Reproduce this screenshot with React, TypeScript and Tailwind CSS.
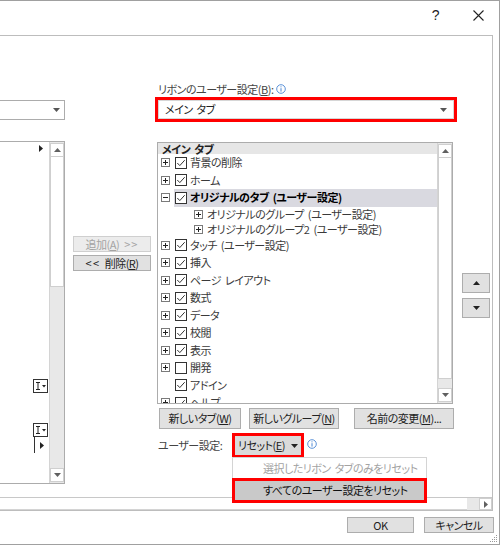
import React from "react";

const Tri = ({ dir = "down", color = "#555" }: { dir?: "down" | "up" | "right"; color?: string }) => {
  if (dir === "right")
    return (
      <svg width="4" height="7" viewBox="0 0 4 7" className="shrink-0">
        <path d="M0 0 L4 3.5 L0 7 Z" fill={color} />
      </svg>
    );
  return (
    <svg width="7" height="4" viewBox="0 0 7 4" className="shrink-0">
      <path d={dir === "down" ? "M0 0 H7 L3.5 4 Z" : "M0 4 H7 L3.5 0 Z"} fill={color} />
    </svg>
  );
};

const Chk = ({ checked = true }: { checked?: boolean }) => (
  <svg width="12" height="12" viewBox="0 0 12 12" className="shrink-0">
    <rect x="0.5" y="0.5" width="11" height="11" fill="white" stroke="#333" />
    {checked && <path d="M2.3 6 L4.8 8.6 L9.7 3.2" fill="none" stroke="#333" strokeWidth="1" />}
  </svg>
);

const Exp = ({ minus = false }: { minus?: boolean }) => (
  <svg width="9" height="9" viewBox="0 0 9 9" className="shrink-0">
    <rect x="0.5" y="0.5" width="8" height="8" fill="white" stroke="#7a7a7a" />
    <path d="M2 4.5 H7" stroke="#222" />
    {!minus && <path d="M4.5 2 V7" stroke="#222" />}
  </svg>
);

const ArrowBox = ({ dir }: { dir: "up" | "down" | "right" }) => (
  <div className="w-full h-[14px] shrink-0 bg-white border border-[#cfcfcf] flex items-center justify-center">
    <Tri dir={dir} color="#606060" />
  </div>
);

const VScroll = ({ thumb }: { thumb: number }) => (
  <div className="w-[15px] shrink-0 border-l border-[#d4d4d4] bg-[#e8e8e8] flex flex-col pt-[1px] pb-[1px]">
    <ArrowBox dir="up" />
    <div className="shrink-0 bg-white border-l border-r border-b border-[#cfcfcf]" style={{ height: thumb }} />
    <div className="flex-1" />
    <ArrowBox dir="down" />
  </div>
);

const FmtIcon = () => (
  <svg width="15" height="14" viewBox="0 0 15 14" className="shrink-0">
    <rect x="0.5" y="0.5" width="14" height="13" fill="white" stroke="#333" />
    <path d="M3 3.5 H7 M5 3.5 V10.5 M3 10.5 H7" stroke="#222" strokeWidth="1" fill="none" />
    <path d="M9 6 H13 L11 8.5 Z" fill="#222" />
  </svg>
);

const Btn = ({ children, className = "" }: { children: React.ReactNode; className?: string }) => (
  <div
    className={`border border-[#adadad] bg-[#e1e1e1] flex items-center justify-center text-[#222] text-[11px] leading-none whitespace-nowrap ${className}`}
  >
    {children}
  </div>
);

const Row = ({
  label,
  exp = true,
  minus = false,
  checked = true,
  hl = false,
}: {
  label: string;
  exp?: boolean;
  minus?: boolean;
  checked?: boolean;
  hl?: boolean;
}) => (
  <div className="h-[17.5px] shrink-0 flex items-center">
    <div className="w-[16px] shrink-0 pl-[3px] flex items-center">{exp && <Exp minus={minus} />}</div>
    <div className={`flex-1 h-full flex items-center gap-[3px] pl-[1px] ${hl ? "bg-[#d9d9e0]" : ""}`}>
      <Chk checked={checked} />
      <span className={`whitespace-nowrap leading-none ${hl ? "font-bold text-black" : "text-[#3a3a3a]"}`}>{label}</span>
    </div>
  </div>
);

const GroupRow = ({ label }: { label: string }) => (
  <div className="h-[15px] shrink-0 flex items-center pl-[36px] gap-[4px]">
    <Exp />
    <span className="whitespace-nowrap leading-none text-[#3a3a3a]">{label}</span>
  </div>
);

const Info = () => (
  <svg width="10" height="10" viewBox="0 0 10 10" className="shrink-0">
    <circle cx="5" cy="5" r="4.3" fill="none" stroke="#4a86d4" strokeWidth="0.9" />
    <path d="M5 4.2 V7.6" stroke="#4a86d4" strokeWidth="1" />
    <circle cx="5" cy="2.8" r="0.6" fill="#4a86d4" />
  </svg>
);

export default function App() {
  return (
    <div className="w-[500px] h-[545px] bg-white border-t border-r border-b border-[#a0a0a0] flex flex-col overflow-hidden font-['Noto_Sans_CJK_JP',sans-serif] [font-feature-settings:'palt'] text-[11px] tracking-[-0.5px] [word-spacing:2px] text-[#333]">
      {/* title bar */}
      <div className="h-[34px] shrink-0 flex items-start justify-end pt-[7px] pr-[15px] gap-[34px]">
        <span className="text-[14px] leading-[14px] text-[#222] font-['Liberation_Sans',sans-serif]">?</span>
        <svg width="11" height="11" viewBox="0 0 11 11" className="mt-[2px]">
          <path d="M0.5 0.5 L10.5 10.5 M10.5 0.5 L0.5 10.5" stroke="#222" strokeWidth="1.1" />
        </svg>
      </div>

      {/* panel */}
      <div className="w-[493px] h-[476px] shrink-0 border-t border-r border-b border-[#bdbdbd] flex flex-col">
        <div className="h-[461px] shrink-0 flex">
          {/* left column */}
          <div className="w-[65px] shrink-0 flex flex-col">
            <div className="mt-[64px] h-[20px] border border-l-0 border-[#acacac] flex items-center justify-end pr-[4px]">
              <Tri dir="down" />
            </div>
            <div className="mt-[21px] h-[343px] border border-l-0 border-[#acacac] flex">
              <div className="flex-1 flex flex-col items-end">
                <div className="mt-[3px] mr-[6px]">
                  <Tri dir="right" color="#222" />
                </div>
                <div className="mt-[227px] mr-[1px]">
                  <FmtIcon />
                </div>
                <div className="mt-[30px] mr-[1px]">
                  <FmtIcon />
                </div>
                <div className="w-[15px] h-[16px] mr-[1px] pl-[1px] flex">
                  <div className="border-l border-[#333] h-full pl-[5px] flex items-center">
                    <Tri dir="right" color="#222" />
                  </div>
                </div>
              </div>
              <VScroll thumb={130} />
            </div>
          </div>

          {/* middle column */}
          <div className="ml-[8px] w-[78px] shrink-0 flex flex-col gap-[3px] pt-[200px]">
            <div className="h-[16px] border border-[#cfcfcf] bg-[#ececec] flex items-center justify-center text-[#a3a3a3] leading-none whitespace-nowrap">
              追加(<span className="underline">A</span>)<span className="ml-[5px] tracking-[1px]">&gt;&gt;</span>
            </div>
            <Btn className="h-[16px]">
              <span className="tracking-[1.5px] mr-[4px]">&lt;&lt;</span>削除(<span className="underline">R</span>)
            </Btn>
          </div>

          {/* right column */}
          <div className="ml-[4px] w-[302px] shrink-0 flex flex-col">
            <div className="mt-[46px] h-[14px] pl-[3px] flex items-center gap-[3px] text-[#444] leading-none whitespace-nowrap">
              <span>
                リボンのユーザー設定(<span className="underline">B</span>):
              </span>
              <Info />
            </div>
            <div className="mt-[1px] h-[25px] border-[3px] border-[#ff0000]">
              <div className="h-full border border-[#d6d6d6] bg-white flex items-center justify-between pl-[6px] pr-[6px]">
                <span className="leading-none text-[#222]">メイン タブ</span>
                <Tri dir="down" />
              </div>
            </div>

            {/* tree */}
            <div className="ml-[2px] mt-[20px] h-[262px] w-[296px] border border-[#acacac] flex">
              <div className="flex-1 overflow-hidden flex flex-col">
                <div className="h-[11px] shrink-0 bg-[#e6e6e6] pl-[4px] font-bold text-[#222] leading-[12px] whitespace-nowrap">
                  メイン タブ
                </div>
                <Row label="背景の削除" />
                <Row label="ホーム" />
                <Row label="オリジナルのタブ (ユーザー設定)" minus hl />
                <GroupRow label="オリジナルのグループ (ユーザー設定)" />
                <GroupRow label="オリジナルのグループ2 (ユーザー設定)" />
                <Row label="タッチ (ユーザー設定)" />
                <Row label="挿入" />
                <Row label="ページ レイアウト" />
                <Row label="数式" />
                <Row label="データ" />
                <Row label="校閲" />
                <Row label="表示" />
                <Row label="開発" checked={false} />
                <Row label="アドイン" exp={false} />
                <Row label="ヘルプ" />
              </div>
              <VScroll thumb={221} />
            </div>

            {/* buttons row */}
            <div className="mt-[4px] h-[21px] flex pl-[4px]">
              <Btn className="w-[82px] h-full">
                新しいタブ(<span className="underline">W</span>)
              </Btn>
              <Btn className="ml-[8px] w-[90px] h-full">
                新しいグループ(<span className="underline">N</span>)
              </Btn>
              <Btn className="ml-[15px] w-[100px] h-full">
                名前の変更(<span className="underline">M</span>)...
              </Btn>
            </div>

            {/* user settings row */}
            <div className="mt-[4px] h-[25px] flex items-center relative">
              <div className="w-[77px] shrink-0 pl-[3px] text-[#444] leading-none whitespace-nowrap">ユーザー設定:</div>
              <div className="w-[72px] h-full shrink-0 border-[3px] border-[#ff0000]">
                <div className="h-full bg-[#dadada] flex items-center justify-center gap-[6px] text-[#222] leading-none whitespace-nowrap">
                  <span>
                    リセット(<span className="underline">E</span>)
                  </span>
                  <Tri dir="down" color="#222" />
                </div>
              </div>
              <div className="ml-[3px] mb-[4px]">
                <Info />
              </div>

              {/* dropdown menu */}
              <div className="absolute left-[77px] top-[24px] w-[195px] z-10 flex flex-col bg-white">
                <div className="h-[21px] border border-b-0 border-[#d4d4d4] flex items-center pl-[30px] text-[#a3a3a3] leading-none whitespace-nowrap">
                  選択したリボン タブのみをリセット
                </div>
                <div className="h-[25px] border-[3px] border-[#ff0000]">
                  <div className="h-full bg-[#c9c9c9] flex items-center pl-[28px] text-[#111] leading-none whitespace-nowrap">
                    すべてのユーザー設定をリセット
                  </div>
                </div>
              </div>
            </div>
          </div>

          {/* up/down */}
          <div className="ml-[5px] w-[28px] shrink-0 flex flex-col gap-[5px] pt-[237px]">
            <Btn className="h-[20px]">
              <Tri dir="up" color="#222" />
            </Btn>
            <Btn className="h-[20px]">
              <Tri dir="down" color="#222" />
            </Btn>
          </div>
        </div>

        {/* horizontal scrollbar */}
        <div className="h-[13px] shrink-0 border-t border-[#c8c8c8] flex">
          <div className="flex-1 bg-white border-b border-[#d4d4d4]" />
          <div className="w-[12px] bg-[#e8e8e8]" />
          <div className="w-[13px] bg-white border border-[#cfcfcf] flex items-center justify-center">
            <Tri dir="right" color="#606060" />
          </div>
        </div>
      </div>

      {/* bottom buttons */}
      <div className="flex-1 flex justify-end items-start pt-[6px] pr-[5px] gap-[10px] relative">
        <Btn className="w-[67px] h-[16px]">OK</Btn>
        <Btn className="w-[70px] h-[16px]">キャンセル</Btn>
        <svg width="8" height="8" viewBox="0 0 8 8" className="absolute right-[1px] bottom-[1px]">
          <rect x="6" y="0" width="1" height="1" fill="#999" />
          <rect x="4" y="2" width="1" height="1" fill="#999" />
          <rect x="6" y="2" width="1" height="1" fill="#999" />
          <rect x="2" y="4" width="1" height="1" fill="#999" />
          <rect x="4" y="4" width="1" height="1" fill="#999" />
          <rect x="6" y="4" width="1" height="1" fill="#999" />
          <rect x="0" y="6" width="1" height="1" fill="#999" />
          <rect x="2" y="6" width="1" height="1" fill="#999" />
          <rect x="4" y="6" width="1" height="1" fill="#999" />
          <rect x="6" y="6" width="1" height="1" fill="#999" />
        </svg>
      </div>
    </div>
  );
}
